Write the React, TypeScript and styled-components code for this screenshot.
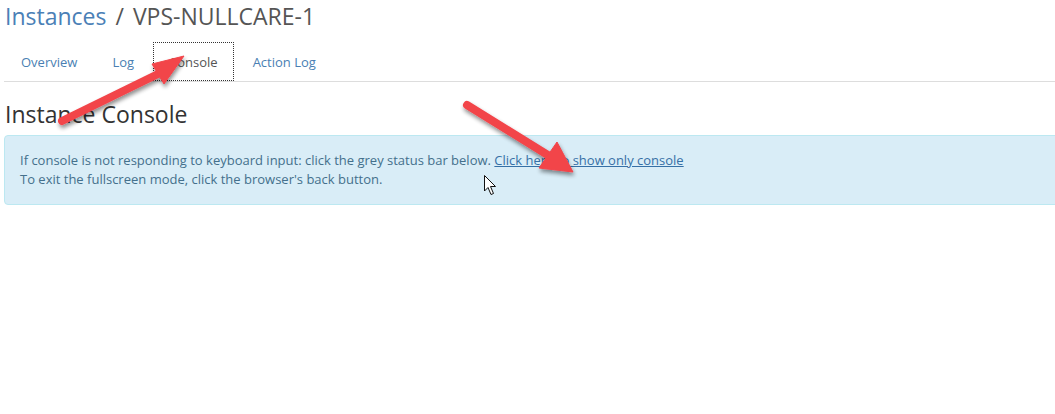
import React from "react";
import styled, { createGlobalStyle } from "styled-components";

const Global = createGlobalStyle`
  html, body { margin: 0; padding: 0; background: #fff; overflow: hidden; }
  body { font-family: "Open Sans", "Liberation Sans", sans-serif; color: #333; }
  * { box-sizing: border-box; }
`;

const Page = styled.div`
  position: relative;
  width: 1055px;
  height: 414px;
  padding: 4px 0 0 4px;
  overflow: hidden;
`;

const Title = styled.h1`
  margin: 0 0 13px 1px;
  font-size: 23px;
  font-weight: 400;
  line-height: 1.1;
  color: #555;
`;

const TitleLink = styled.a`
  color: #4a80b6;
  text-decoration: none;
  margin-right: 9px;
`;

const Sep = styled.span`
  margin-right: 9px;
`;

const Tabs = styled.ul`
  display: flex;
  list-style: none;
  margin: 0 -20px 0 0;
  padding: 0;
  border-bottom: 1px solid #ddd;
`;

const Tab = styled.li<{ $active?: boolean }>`
  margin: 0 3px 0 0;
  height: 39px;
  padding: 0 15px;
  display: flex;
  align-items: center;
  font-size: 13px;
  color: ${(p) => (p.$active ? "#555" : "#4a7fb3")};
  border: 1px ${(p) => (p.$active ? "dotted #333" : "solid transparent")};
  &:first-child { margin-left: 1px; }
`;

const Heading = styled.h3`
  margin: 20px 0 7px 1px;
  font-size: 23px;
  font-weight: 400;
  line-height: 1.1;
  color: #333;
`;

const Alert = styled.div`
  margin-right: -12px;
  padding: 15px;
  border: 1px solid #bce8f1;
  border-radius: 4px;
  background: #d9edf7;
  color: #44708c;
  font-size: 13px;
  line-height: 19px;
`;

const AlertLink = styled.a`
  color: #3670a6;
  text-decoration: underline;
`;

const Overlay = styled.svg`
  position: absolute;
  left: 0;
  top: 0;
  pointer-events: none;
`;

export default function App() {
  return (
    <>
      <Global />
      <Page>
        <Title>
          <TitleLink href="#">Instances</TitleLink>
          <Sep>/</Sep>VPS-NULLCARE-1
        </Title>
        <Tabs>
          <Tab>Overview</Tab>
          <Tab>Log</Tab>
          <Tab $active>Console</Tab>
          <Tab>Action Log</Tab>
        </Tabs>
        <Heading>Instance Console</Heading>
        <Alert>
          If console is not responding to keyboard input: click the grey status bar below.{" "}
          <AlertLink href="#">Click here to show only console</AlertLink>
          <br />
          To exit the fullscreen mode, click the browser's back button.
        </Alert>
        <Overlay width="1055" height="414" viewBox="0 0 1055 414">
          <defs>
            <filter id="sh" x="-20%" y="-20%" width="140%" height="140%">
              <feGaussianBlur in="SourceAlpha" stdDeviation="2" />
              <feOffset dx="1" dy="3" result="b" />
              <feComponentTransfer>
                <feFuncA type="linear" slope="0.45" />
              </feComponentTransfer>
              <feMerge>
                <feMergeNode />
                <feMergeNode in="SourceGraphic" />
              </feMerge>
            </filter>
          </defs>
          <g filter="url(#sh)" fill="#f2444a" stroke="#f2444a">
            <line x1="62" y1="121" x2="160" y2="73" strokeWidth="8" strokeLinecap="round" />
            <polygon points="152,64 184,56 164,84" strokeWidth="1" strokeLinejoin="round" />
            <line x1="467" y1="105" x2="551" y2="157" strokeWidth="8" strokeLinecap="round" />
            <polygon points="557,142 573,172 539,168" strokeWidth="1" strokeLinejoin="round" />
          </g>
          <path
            d="M484.5 175.5 L484.5 191 L488 187.5 L491 194.5 L493.5 193.5 L490.5 186.5 L495.5 186.5 Z"
            fill="#fff"
            stroke="#111"
            strokeWidth="1"
            strokeLinejoin="round"
          />
        </Overlay>
      </Page>
    </>
  );
}
